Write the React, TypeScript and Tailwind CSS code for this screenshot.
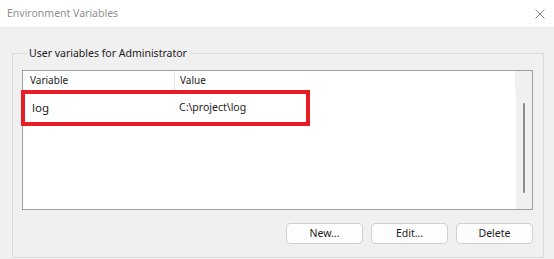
const buttons = ["New...", "Edit...", "Delete"];

export default function App() {
  return (
    <div className="w-[554px] h-[259px] overflow-hidden bg-white font-['Noto_Sans',sans-serif] text-[10px] text-[#1b1b1b]">
      {/* title bar */}
      <div className="h-[27px] flex items-center justify-between pl-[7px] pr-[9px]">
        <span className="text-[#8f8f8f] text-[10.5px] leading-none">Environment Variables</span>
        <svg width="10" height="10" viewBox="0 0 10 10" fill="none">
          <path d="M0.5 0.5L9.5 9.5M9.5 0.5L0.5 9.5" stroke="#8a8a8a" strokeWidth="1" />
        </svg>
      </div>

      <div className="h-[232px] bg-[#f0f0f0] pt-[18px] pl-[12px] pr-[10px]">
        <fieldset className="border border-[#dcdcdc] pl-[9px] pr-[10px] pb-[13px]">
          <legend className="ml-[5px] px-[2px] leading-[16px] text-[10.5px]">User variables for Administrator</legend>

          <div className="mt-[9px] h-[140px] border border-[#a0a0a0] bg-white flex">
            <div className="flex-1 flex flex-col">
              <div className="h-[19px] flex items-center border-r border-[#f0f0f0]">
                <div className="w-[152px] h-full flex items-center pl-[7px] border-r border-[#e5e5e5]">Variable</div>
                <div className="pl-[5px]">Value</div>
              </div>
              <div className="relative h-[36px] flex items-center">
                <div className="w-[152px] pl-[9px] text-[11.5px]">log</div>
                <div className="pl-[4px] text-[10.5px]">C:\project\log</div>
                <div className="absolute left-[-2px] top-0 w-[289px] h-[36px] border-4 border-[#e81c24]" />
              </div>
            </div>
            <div className="w-[16px] bg-[#f0f0f0] flex justify-center pt-[32px]">
              <div className="w-[2px] h-[90px] rounded-full bg-[#8b8b8b]" />
            </div>
          </div>

          <div className="mt-[13px] flex justify-end gap-[8px]">
            {buttons.map((b) => (
              <button
                key={b}
                className="w-[77px] h-[21px] rounded-[4px] border border-[#d0d0d0] bg-[#fdfdfd] text-[10.5px] leading-none"
              >
                {b}
              </button>
            ))}
          </div>
        </fieldset>
      </div>
    </div>
  );
}
